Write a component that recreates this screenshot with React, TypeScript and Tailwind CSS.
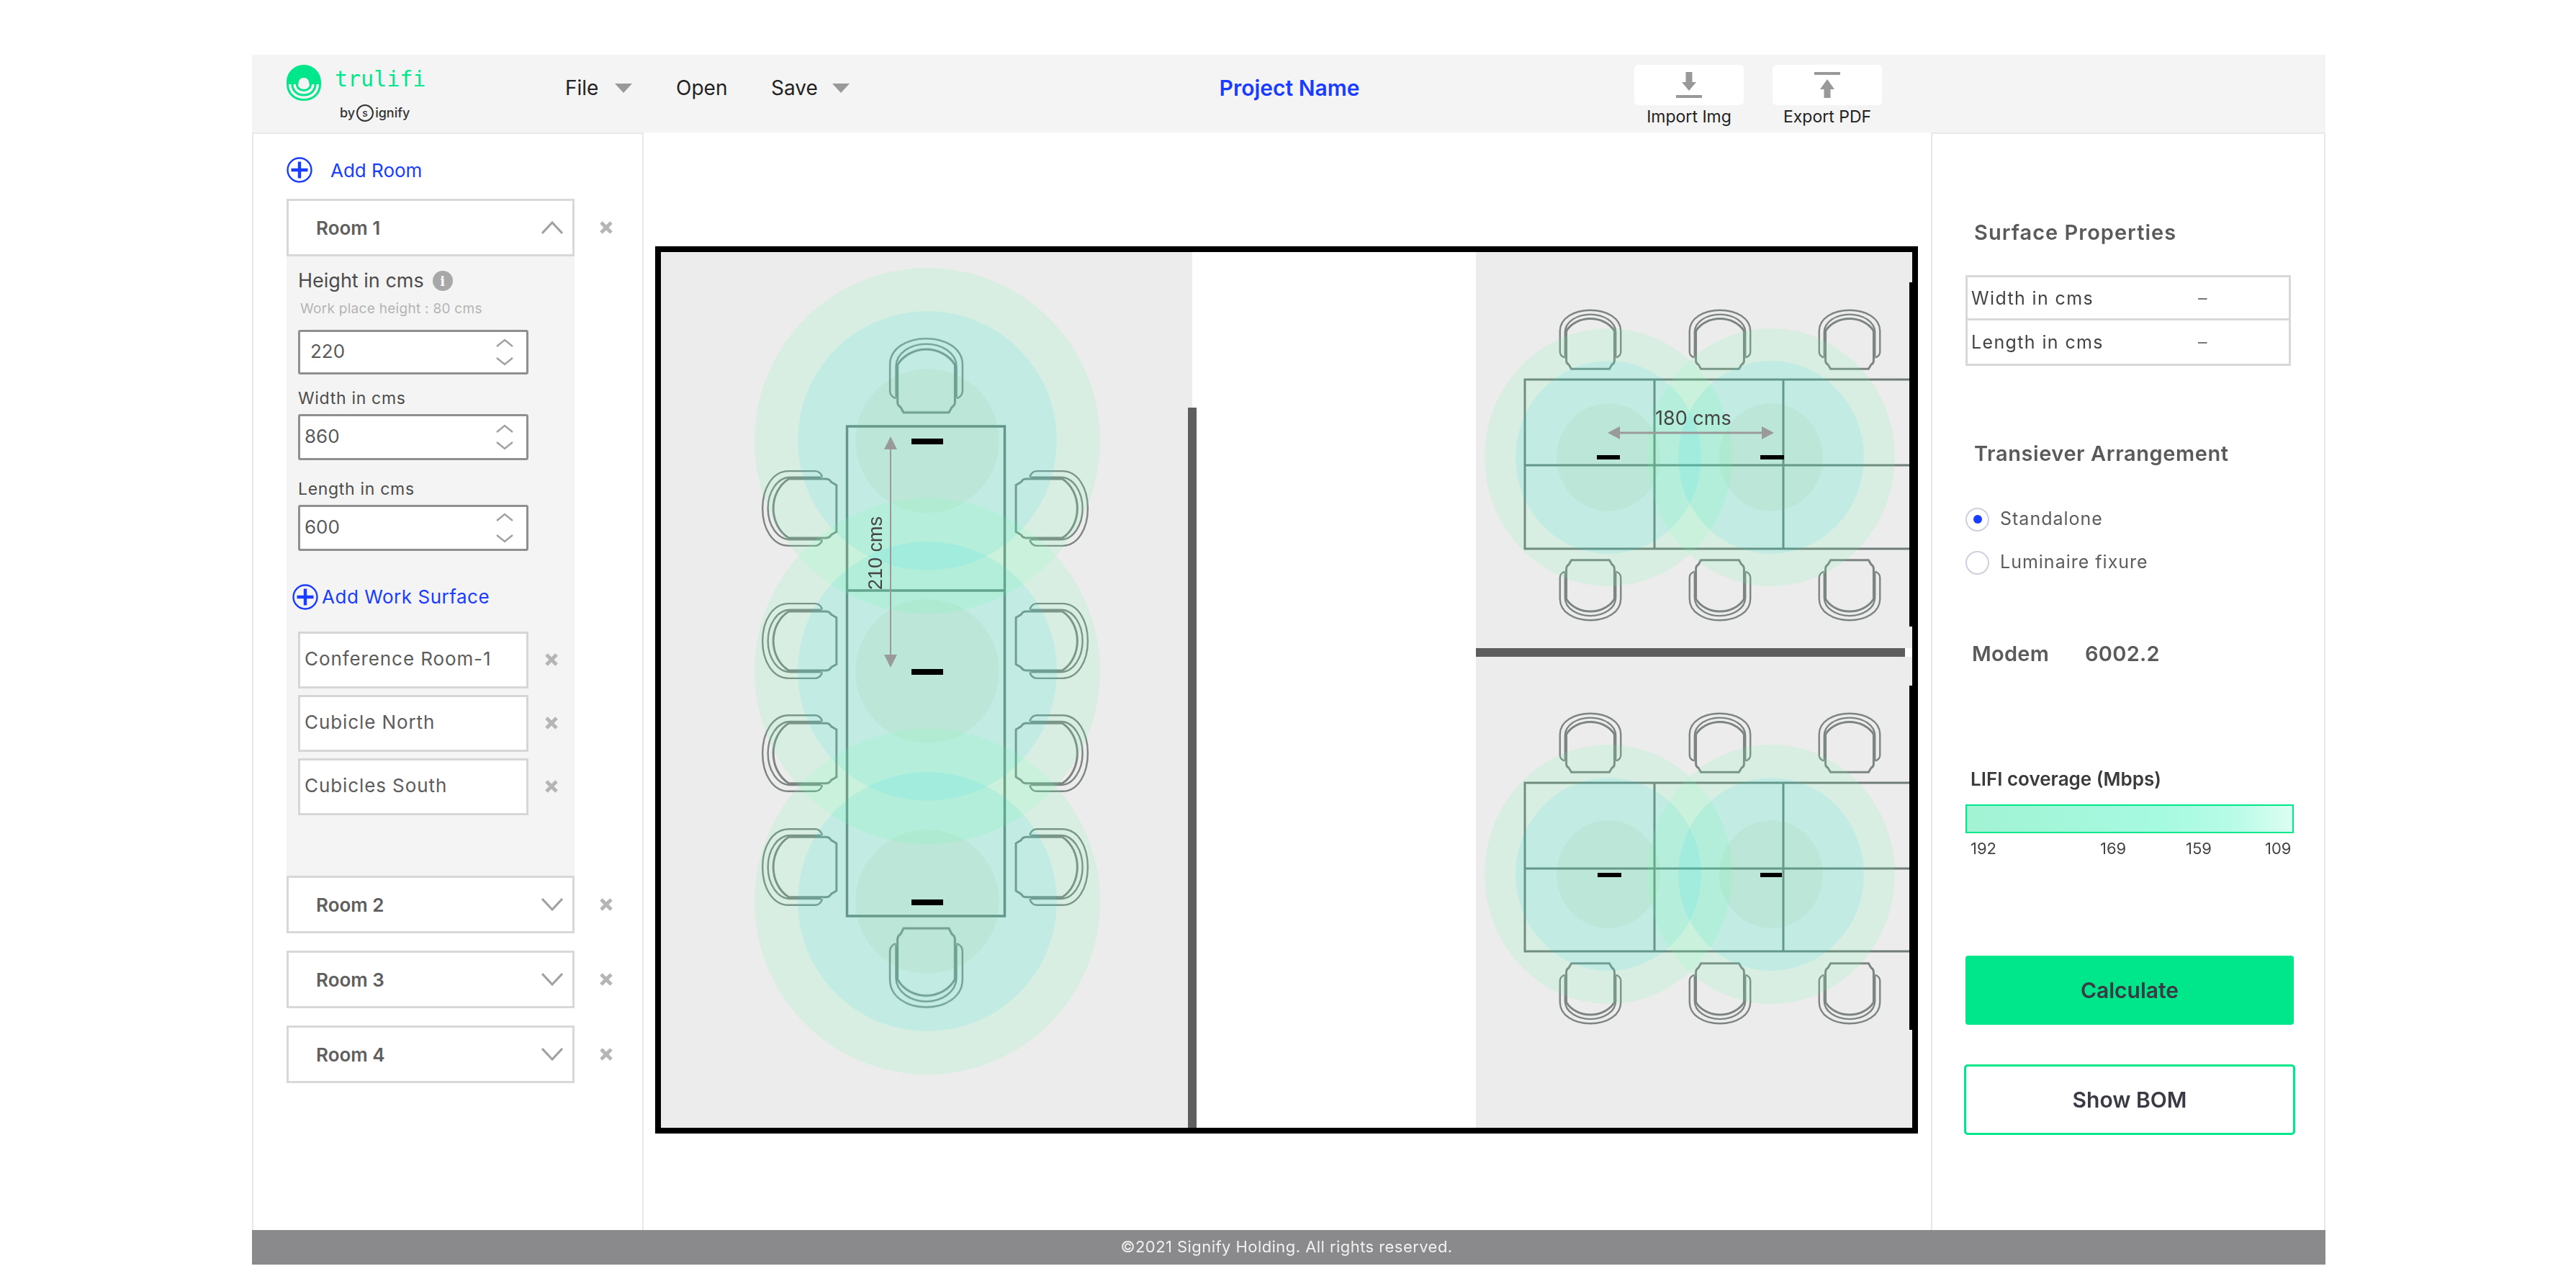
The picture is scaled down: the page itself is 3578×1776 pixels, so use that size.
import React from "react";

const Plus = ({ className }: { className: string }) => (
  <svg viewBox="0 0 36 36" className={className}>
    <circle cx="18" cy="18" r="16.5" fill="none" stroke="#1a3cff" strokeWidth="2.4" />
    <path d="M18 6.5V29.5M6.5 18H29.5" stroke="#1a3cff" strokeWidth="4.4" />
  </svg>
);

const Cross = ({ size = 20 }: { size?: number }) => (
  <svg viewBox="0 0 20 20" width={size} height={size} className="shrink-0">
    <path d="M3 3L17 17M17 3L3 17" stroke="#b5b5b5" strokeWidth="5" />
  </svg>
);

const Chev = ({ up, w = 30, h = 18, sw = 3, c = "#a0a0a0" }: { up?: boolean; w?: number; h?: number; sw?: number; c?: string }) => (
  <svg width={w} height={h} viewBox={`0 0 ${w} ${h}`} className="block shrink-0">
    <path
      d={up ? `M1 ${h - 1}L${w / 2} 2L${w - 1} ${h - 1}` : `M1 1L${w / 2} ${h - 2}L${w - 1} 1`}
      fill="none"
      stroke={c}
      strokeWidth={sw}
    />
  </svg>
);

const Tri = () => (
  <svg width="24" height="13" viewBox="0 0 24 13" className="block shrink-0">
    <path d="M0 0H24L12 13Z" fill="#999" />
  </svg>
);

const Logo = () => (
  <svg width="48" height="50" viewBox="0 0 48 50" className="block">
    <path d="M0 24C0 10 11 0 24 0C37 0 48 10 48 24V27H31.5C31.5 21 28.5 18 24 18C19.5 18 16.5 21 16.5 27H0Z" fill="#00e68a" />
    <path d="M1.5 27C1.5 40 11 48.5 24 48.5C37 48.5 46.5 40 46.5 27" fill="none" stroke="#00e68a" strokeWidth="3" />
    <path d="M8 27C8 36 15 42 24 42C33 42 40 36 40 27" fill="none" stroke="#00e68a" strokeWidth="3" />
    <path d="M14.5 27C14.5 32 18.5 35.5 24 35.5C29.5 35.5 33.5 32 33.5 27" fill="none" stroke="#00e68a" strokeWidth="3" />
  </svg>
);

const Stepper = ({ gap }: { gap: string }) => (
  <div className={`flex flex-col items-center ${gap}`}>
    <Chev up w={24} h={12} sw={2.4} />
    <Chev w={24} h={12} sw={2.4} />
  </div>
);

const NumField = ({ value, h, pl, gap }: { value: string; h: string; pl: string; gap: string }) => (
  <div className={`flex w-[320px] items-center justify-between rounded-[3px] border-[3px] border-[#8f8f8f] bg-white pr-[18px] ${h} ${pl}`}>
    <span className="pb-[2px] text-[26px] leading-none text-[#5a5a5a]">{value}</span>
    <Stepper gap={gap} />
  </div>
);

const SurfaceRow = ({ name }: { name: string }) => (
  <div className="flex items-center">
    <div className="flex h-[79px] w-[320px] items-center border-[3px] border-[#d6d6d6] bg-white pb-[4px] pl-[6px] text-[26px] tracking-[0.035em] text-[#5c5c5c]">
      {name}
    </div>
    <div className="ml-[22px] -mt-[2px]"><Cross size={20} /></div>
  </div>
);

const RoomHead = ({ name, open }: { name: string; open?: boolean }) => (
  <div className="flex items-center">
    <div className="flex h-[80px] w-[400px] items-center justify-between border-[3px] border-[#d8d8d8] bg-white pl-[38px] pr-[13px] text-[26px] font-semibold text-[#5f5f5f]">
      <span>{name}</span>
      <Chev up={open} w={30} h={18} sw={3} />
    </div>
    <div className="ml-[34px]"><Cross size={20} /></div>
  </div>
);

const Chair = ({ x, y, w, h, r = 0 }: { x: number; y: number; w: number; h: number; r?: number }) => {
  const side = Math.abs(r) === 90;
  const sx = (side ? h : w) / 100;
  const sy = (side ? w : h) / 100;
  return (
    <g transform={`translate(${x + w / 2} ${y + h / 2}) rotate(${r}) scale(${sx} ${sy}) translate(-50 -50)`} fill="none" stroke="#7d8583">
      <path vectorEffect="non-scaling-stroke" strokeWidth="2.4" d="M2 70V36C2 15 24 2 50 2C76 2 98 15 98 36V70Q98 76 92 79H90M2 70Q2 76 8 79H10" />
      <path vectorEffect="non-scaling-stroke" strokeWidth="2.4" d="M10 78V38C10 21 29 9 50 9C71 9 90 21 90 38V78" />
      <path vectorEffect="non-scaling-stroke" strokeWidth="3" d="M12 36C20 23 35 16 50 16C65 16 80 23 88 36V84Q88 89 84 91L80 98H20L16 91Q12 89 12 84Z" />
    </g>
  );
};

const Coverage = ({ cx, cy, r, rx, ry, ix, iy }: { cx: number; cy: number; r: [number, number]; rx: number; ry: number; ix: number; iy: number }) => (
  <g>
    <ellipse cx={cx} cy={cy} rx={r[0]} ry={r[1]} fill="rgb(107,255,171)" fillOpacity="0.14" />
    <ellipse cx={cx} cy={cy} rx={rx} ry={ry} fill="rgb(27,222,227)" fillOpacity="0.12" />
    <ellipse cx={cx} cy={cy} rx={ix} ry={iy} fill="rgb(120,180,100)" fillOpacity="0.09" />
  </g>
);

const Desks = ({ top, mid, bottom }: { top: number; mid: number; bottom: number }) => (
  <path
    d={`M2656 ${top}H2118V${bottom}H2656M2118 ${mid}H2656M2298 ${top}V${bottom}M2477 ${top}V${bottom}`}
    fill="none"
    stroke="#6f7b78"
    strokeWidth="3"
  />
);

const Plan = () => {
  const xs = [2165, 2345, 2525];
  const leftRows: [number, number][] = [
    [652, 108],
    [836, 108],
    [991, 110],
    [1149, 110],
  ];
  return (
    <svg viewBox="910 342 1754 1232" width="1754" height="1232" className="block shrink-0">
      <defs>
        <filter id="soft" x="-2%" y="-2%" width="104%" height="104%">
          <feGaussianBlur stdDeviation="0.55" />
        </filter>
      </defs>
      <rect x="918" y="350" width="738" height="1216" fill="#ececec" />
      <rect x="2050" y="350" width="606" height="550" fill="#ececec" />
      <rect x="2050" y="912" width="606" height="654" fill="#ececec" />

      <g filter="url(#soft)">
        <path d="M1176.5 592H1395.5V1272H1176.5ZM1176.5 820H1395.5" fill="none" stroke="#6f7b78" strokeWidth="3.5" />
        <Chair x={1234} y={468} w={105} h={107} />
        <Chair x={1234} y={1287} w={105} h={114} r={180} />
        {leftRows.map(([y, h]) => (
          <g key={y}>
            <Chair x={1057} y={y} w={107} h={h} r={-90} />
            <Chair x={1409} y={y} w={104} h={h} r={90} />
          </g>
        ))}
        <Desks top={527} mid={646} bottom={762} />
        <Desks top={1087} mid={1206} bottom={1321} />
        {xs.map((x) => (
          <g key={x}>
            <Chair x={x} y={429} w={88} h={85} />
            <Chair x={x} y={776} w={88} h={87} r={180} />
            <Chair x={x} y={989} w={88} h={85} />
            <Chair x={x} y={1336} w={88} h={87} r={180} />
          </g>
        ))}
      </g>

      <Coverage cx={1288} cy={612} r={[240, 240]} rx={180} ry={180} ix={100} iy={100} />
      <Coverage cx={1288} cy={932} r={[240, 240]} rx={180} ry={180} ix={100} iy={100} />
      <Coverage cx={1288} cy={1252} r={[240, 240]} rx={180} ry={180} ix={100} iy={100} />
      <Coverage cx={2234} cy={635} r={[172, 179]} rx={129} ry={134} ix={72} iy={75} />
      <Coverage cx={2460} cy={635} r={[172, 179]} rx={129} ry={134} ix={72} iy={75} />
      <Coverage cx={2234} cy={1214} r={[172, 180]} rx={129} ry={134} ix={72} iy={75} />
      <Coverage cx={2460} cy={1214} r={[172, 180]} rx={129} ry={134} ix={72} iy={75} />

      <rect x="1266" y="609" width="44" height="8" fill="#000" />
      <rect x="1266" y="929" width="44" height="8" fill="#000" />
      <rect x="1266" y="1249" width="44" height="8" fill="#000" />
      <rect x="2218" y="632" width="32" height="6" fill="#000" />
      <rect x="2445" y="632" width="33" height="6" fill="#000" />
      <rect x="2219" y="1212" width="33" height="6" fill="#000" />
      <rect x="2445" y="1212" width="30" height="6" fill="#000" />

      <path d="M1237 620V912" stroke="#9a9a9a" strokeWidth="2" />
      <path d="M1237 606L1246 624H1228ZM1237 927L1246 909H1228Z" fill="#9a9a9a" />
      <text x="1225" y="819" transform="rotate(-90 1225 819)" fontFamily="'Liberation Sans',sans-serif" fontSize="27" fill="#444">210 cms</text>

      <path d="M2248 601H2448" stroke="#9a9a9a" strokeWidth="3" />
      <path d="M2233 601L2250 592V610ZM2464 601L2447 592V610Z" fill="#9a9a9a" />
      <text x="2299" y="590" fontFamily="Inter,sans-serif" fontSize="27" fill="#444">180 cms</text>

      <rect x="1650" y="566" width="12" height="1000" fill="#5f5f5f" />
      <rect x="2050" y="900" width="596" height="12" fill="#5d5d5d" />
      <rect x="2652" y="392" width="4" height="478" fill="#000" />
      <rect x="2652" y="952" width="4" height="478" fill="#000" />
      <rect x="914" y="346" width="1746" height="1224" fill="none" stroke="#000" strokeWidth="8" />
    </svg>
  );
};

export default function App() {
  return (
    <div className="w-[2880px] ml-[350px] pt-[76px] font-[Inter,sans-serif]">
      <header className="flex h-[108px] items-start bg-[#f4f4f4]">
        <div className="flex w-[435px] shrink-0 flex-col pl-[48px] pt-[14px]">
          <div className="flex items-start">
            <Logo />
            <span className="ml-[19px] mt-[2px] font-['DejaVu_Sans_Mono',monospace] text-[30px] leading-[36px] text-[#00e68a]">trulifi</span>
          </div>
          <div className="ml-[74px] mt-[5px] flex items-center text-[18px] font-medium leading-none text-[#333]">
            <span>by</span>
            <span className="mx-[2px] flex h-[24px] w-[24px] items-center justify-center rounded-full border-2 border-[#333] text-[14px]">s</span>
            <span>ignify</span>
          </div>
        </div>
        <nav className="flex h-[92px] items-center text-[28px] text-[#222]">
          <span className="w-[45px]">File</span>
          <span className="ml-[24px]"><Tri /></span>
          <span className="ml-[61px] w-[71px]">Open</span>
          <span className="ml-[61px] w-[62px]">Save</span>
          <span className="ml-[23px]"><Tri /></span>
        </nav>
        <div className="ml-[511px] flex h-[92px] w-[200px] items-center justify-center whitespace-nowrap text-[30px] font-semibold text-[#1a3cff]">
          Project Name
        </div>
        <div className="ml-[379px] flex gap-[40px] pt-[14px]">
          {[
            { label: "Import Img", d: "M13.5 0H22.5V14H28L18 26L8 14H13.5ZM0 32H36V36H0Z" },
            { label: "Export PDF", d: "M0 0H36V4H0ZM18 10L28 24H22.5V36H13.5V24H8Z" },
          ].map((b) => (
            <div key={b.label} className="flex w-[152px] flex-col items-center">
              <div className="flex h-[56px] w-[152px] items-center justify-center rounded-[6px] bg-white">
                <svg width="36" height="36" viewBox="0 0 36 36" className="block">
                  <path d={b.d} fill="#999" />
                </svg>
              </div>
              <span className="mt-[4px] whitespace-nowrap text-[23px] leading-[24px] text-[#222]">{b.label}</span>
            </div>
          ))}
        </div>
      </header>

      <main className="flex h-[1524px]">
        <aside className="w-[544px] shrink-0 border-x-2 border-t-2 border-[#e8e8e8] pl-[46px]">
          <div className="mt-[32px] flex h-[36px] items-center">
            <Plus className="h-[36px] w-[36px]" />
            <span className="ml-[25px] text-[26px] text-[#1a3cff]">Add Room</span>
          </div>
          <div className="mt-[22px]">
            <RoomHead name="Room 1" open />
          </div>
          <div className="w-[400px] bg-[#f4f4f4] pb-[84px] pl-[16px] pt-[18px]">
            <div className="flex h-[32px] items-center text-[27px] text-[#4c4c4c]">
              <span>Height in cms</span>
              <span className="ml-[12px] flex h-[28px] w-[28px] items-center justify-center rounded-full bg-[#a8a8a8] font-['DejaVu_Serif',serif] text-[18px] font-bold text-white">i</span>
            </div>
            <div className="ml-[3px] mt-[13px] h-[20px] text-[19px] leading-[20px] tracking-[0.015em] text-[#b4b4b4]">Work place height : 80 cms</div>
            <div className="mt-[19px]"><NumField value="220" h="h-[62px]" pl="pl-[14px]" gap="gap-[14px]" /></div>
            <div className="mt-[19px] h-[28px] text-[23px] leading-[28px] tracking-[0.03em] text-[#4c4c4c]">Width in cms</div>
            <div className="mt-[8px]"><NumField value="860" h="h-[64px]" pl="pl-[6px]" gap="gap-[12px]" /></div>
            <div className="mt-[26px] h-[28px] text-[23px] leading-[28px] tracking-[0.03em] text-[#4c4c4c]">Length in cms</div>
            <div className="mt-[8px]"><NumField value="600" h="h-[64px]" pl="pl-[6px]" gap="gap-[18px]" /></div>
            <div className="-ml-[8px] mt-[46px] flex h-[36px] items-center">
              <Plus className="h-[36px] w-[36px]" />
              <span className="ml-[5px] pb-[2px] text-[26px] tracking-[0.02em] text-[#1a3cff]">Add Work Surface</span>
            </div>
            <div className="mt-[30px] flex flex-col gap-[9px]">
              <SurfaceRow name="Conference Room-1" />
              <SurfaceRow name="Cubicle North" />
              <SurfaceRow name="Cubicles South" />
            </div>
          </div>
          <div className="flex flex-col gap-[24px]">
            <RoomHead name="Room 2" />
            <RoomHead name="Room 3" />
            <RoomHead name="Room 4" />
          </div>
        </aside>

        <section className="flex-1 pl-[16px] pt-[158px]">
          <Plan />
        </section>

        <aside className="w-[548px] shrink-0 border-x-2 border-t-2 border-[#e8e8e8] pl-[46px]">
          <h2 className="ml-[12px] mt-[122px] h-[30px] whitespace-nowrap text-[29px] font-semibold leading-[30px] tracking-[0.035em] text-[#5a5a5a]">Surface Properties</h2>
          <div className="mt-[44px] w-[452px] border-[3px] border-[#d8d8d8] text-[25px] tracking-[0.055em] text-[#444]">
            <div className="flex h-[60px] items-center border-b-[3px] border-[#d8d8d8] pl-[5px] pt-[2px]">
              <span className="w-[315px]">Width in cms</span>
              <span className="text-[#777]">–</span>
            </div>
            <div className="flex h-[60px] items-center pl-[5px] pt-[2px]">
              <span className="w-[315px]">Length in cms</span>
              <span className="text-[#777]">–</span>
            </div>
          </div>
          <h2 className="ml-[12px] mt-[107px] h-[30px] whitespace-nowrap text-[29px] font-semibold leading-[30px] tracking-[0.02em] text-[#5a5a5a]">Transiever Arrangement</h2>
          <div className="mt-[60px] flex h-[32px] items-center">
            <span className="flex h-[33px] w-[33px] items-center justify-center rounded-full border-2 border-[#cfcfe0]">
              <span className="h-[12px] w-[12px] rounded-full bg-[#1a3cff]" />
            </span>
            <span className="ml-[15px] text-[25px] tracking-[0.04em] text-[#5c5c5c]">Standalone</span>
          </div>
          <div className="mt-[28px] flex h-[32px] items-center">
            <span className="h-[33px] w-[33px] rounded-full border-2 border-[#cfcfe0]" />
            <span className="ml-[15px] text-[25px] tracking-[0.04em] text-[#5c5c5c]">Luminaire fixure</span>
          </div>
          <div className="ml-[9px] mt-[96px] flex h-[30px] items-center text-[29px] font-semibold tracking-[0.01em] text-[#5a5a5a]">
            <span className="w-[157px]">Modem</span>
            <span>6002.2</span>
          </div>
          <div className="ml-[7px] mt-[146px] h-[26px] whitespace-nowrap text-[26px] font-semibold leading-[26px] text-[#3a3a3a]">LIFI coverage (Mbps)</div>
          <div className="mt-[22px] h-[40px] w-[456px] border-2 border-[#00e68a] bg-[linear-gradient(90deg,#a2f3d4_0%,#a6fae0_60%,#b8fbe6_82%,#dcfdf2_100%)]" />
          <div className="mt-[9px] flex h-[24px] items-center pl-[7px] text-[22px] leading-none text-[#444]">
            <span className="w-[38px]">192</span>
            <span className="ml-[142px] w-[38px]">169</span>
            <span className="ml-[81px] w-[38px]">159</span>
            <span className="ml-[72px] w-[38px]">109</span>
          </div>
          <button className="mt-[137px] flex h-[96px] w-[456px] items-center justify-center rounded-[4px] bg-[#00e68a] text-[30px] font-semibold text-[#3a3a44]">Calculate</button>
          <button className="-ml-[2px] mt-[55px] flex h-[98px] w-[460px] items-center justify-center rounded-[5px] border-[3px] border-[#00e68a] bg-white text-[30px] font-semibold text-[#3a3a44]">Show BOM</button>
        </aside>
      </main>

      <footer className="flex h-[48px] items-center justify-center bg-[#8a8a8c] pb-[2px] pr-[6px] text-[22px] tracking-[0.02em] text-[#f0f0f0]">
        ©2021 Signify Holding. All rights reserved.
      </footer>
    </div>
  );
}
